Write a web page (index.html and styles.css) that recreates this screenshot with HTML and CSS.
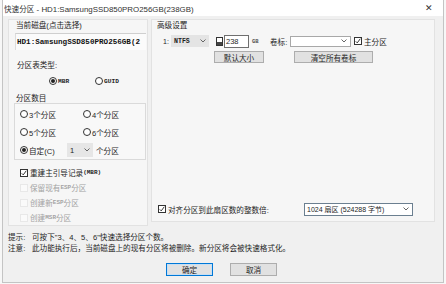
FILE: index.html
```html
<!DOCTYPE html>
<html lang="zh-CN">
<head>
<meta charset="utf-8">
<title>快速分区</title>
<link rel="stylesheet" href="styles.css">
</head>
<body>
<div class="window">
  <div class="titlebar">
    <span class="title"><span class="t-cn">快速分区</span> - HD1:SamsungSSD850PRO256GB(238GB)</span>
    <span class="close">✕</span>
  </div>
  <div class="main">
    <div class="panel left">
      <div class="lbl l-disk">当前磁盘(点击选择)</div>
      <div class="diskbox">HD1:SamsungSSD850PRO256GB(2</div>
      <div class="lbl l-type">分区表类型:</div>
      <div class="typerow">
        <span class="opt w46"><span class="radio on"></span><span class="mono">MBR</span></span>
        <span class="opt"><span class="radio"></span><span class="mono">GUID</span></span>
      </div>
      <div class="lbl l-count">分区数目</div>
      <div class="group">
        <div class="grow"><span class="opt w63"><span class="radio"></span>3个分区</span><span class="opt"><span class="radio"></span>4个分区</span></div>
        <div class="grow"><span class="opt w63"><span class="radio"></span>5个分区</span><span class="opt"><span class="radio"></span>6个分区</span></div>
        <div class="grow"><span class="opt w47"><span class="radio on"></span>自定(C)</span><span class="combo c-num"><span>1</span><svg class="chev" width="6" height="4" viewBox="0 0 6 4"><polyline points="0.5,0.5 3,3 5.5,0.5" fill="none" stroke="#666"/></svg></span><span class="after">个分区</span></div>
      </div>
      <div class="checks">
        <div class="chk"><span class="cb"><svg width="6" height="6" viewBox="0 0 8 8"><polyline points="1,4.5 3,6.5 7,1" fill="none" stroke="#222" stroke-width="1.2"/></svg></span>重建主引导记录<span class="mono sm">(MBR)</span></div>
        <div class="chk dis"><span class="cb"></span>保留现有<span class="mono sm">ESP</span>分区</div>
        <div class="chk dis"><span class="cb"></span>创建新<span class="mono sm">ESP</span>分区</div>
        <div class="chk dis"><span class="cb"></span>创建<span class="mono sm">MSR</span>分区</div>
      </div>
    </div>
    <div class="panel right">
      <div class="lbl l-adv">高级设置</div>
      <div class="row1">
        <span class="num">1:</span>
        <span class="combo c-fs"><span class="mono">NTFS</span><svg class="chev" width="6" height="4" viewBox="0 0 6 4"><polyline points="0.5,0.5 3,3 5.5,0.5" fill="none" stroke="#666"/></svg></span>
        <svg class="drive" width="7" height="9" viewBox="0 0 7 9"><rect x="0.5" y="0.5" width="6" height="8" fill="#fff" stroke="#333"/><rect x="1" y="5" width="5" height="3" fill="#444"/></svg>
        <span class="input i-size">238</span>
        <span class="unit mono">GB</span>
        <span class="vol">卷标:</span>
        <span class="input i-vol"><svg class="chev" width="6" height="4" viewBox="0 0 6 4"><polyline points="0.5,0.5 3,3 5.5,0.5" fill="none" stroke="#666"/></svg></span>
        <span class="cb dark"><svg width="6" height="6" viewBox="0 0 8 8"><polyline points="1,4.5 3,6.5 7,1" fill="none" stroke="#222" stroke-width="1.2"/></svg></span>
        <span class="primary">主分区</span>
      </div>
      <div class="row2">
        <span class="btn b-default">默认大小</span>
        <span class="btn b-clear">清空所有卷标</span>
      </div>
      <div class="spacer"></div>
      <div class="alignrow">
        <span class="cb dark"><svg width="6" height="6" viewBox="0 0 8 8"><polyline points="1,4.5 3,6.5 7,1" fill="none" stroke="#222" stroke-width="1.2"/></svg></span>
        <span class="align-txt">对齐分区到此扇区数的整数倍:</span>
        <span class="combo c-align"><span>1024 扇区 (524288 字节)</span><svg class="chev" width="6" height="4" viewBox="0 0 6 4"><polyline points="0.5,0.5 3,3 5.5,0.5" fill="none" stroke="#666"/></svg></span>
      </div>
    </div>
  </div>
  <div class="hints">
    <div class="hint"><span class="hl">提示:</span><span>可按下"3、4、5、6"快速选择分区个数。</span></div>
    <div class="hint"><span class="hl">注意:</span><span>此功能执行后，当前磁盘上的现有分区将被删除。新分区将会被快速格式化。</span></div>
  </div>
  <div class="buttons">
    <span class="btn b-ok">确定</span>
    <span class="btn b-cancel">取消</span>
  </div>
</div>
</body>
</html>
```

FILE: styles.css
```css
* { box-sizing: border-box; }
html, body { margin: 0; padding: 0; }
body {
  width: 446px;
  height: 284px;
  background: #f7f7f7;
  font-family: "Liberation Sans", "Noto Sans CJK SC", sans-serif;
  font-size: 7.6px;
  color: #1e1e1e;
  overflow: hidden;
}
.window {
  margin-left: 2px;
  width: 442px;
  height: 283px;
  background: #f0f0f0;
  border: 1px solid #c4c4c4;
  border-top: none;
}
.titlebar {
  height: 16px;
  background: #fff;
  display: flex;
  align-items: center;
  justify-content: space-between;
  padding: 0 0 0 1px;
}
.title { font-size: 7.9px; color: #333; white-space: nowrap; }
.t-cn { font-size: 7.6px; }
.close { font-size: 9px; color: #333; width: 22px; margin-right: 3px; text-align: center; }

.main { display: flex; align-items: flex-start; padding-top: 3px; }
.panel { background: #f6f6f6; border: 1px solid #e2e2e2; }
.left { margin-left: 5px; width: 140px; height: 207px; display: flex; flex-direction: column; }
.right { margin-left: 3px; width: 284px; height: 203px; display: flex; flex-direction: column; }

.lbl { line-height: 10px; height: 10px; white-space: nowrap; }
.l-disk { margin-top: 1px; padding-left: 7px; }
.diskbox {
  margin-top: 2px;
  margin-left: 6px;
  width: 131px;
  height: 17px;
  background: #fbfbfb;
  border-top: 1px solid #cfcfcf;
  border-left: 1px solid #dcdcdc;
  font-family: "Liberation Mono", monospace;
  font-weight: bold;
  font-size: 7.6px;
  line-height: 16px;
  padding-left: 1px;
  white-space: nowrap;
  overflow: hidden;
  color: #111;
}
.l-type { margin-top: 11px; padding-left: 8px; }
.typerow { margin-top: 5px; height: 10px; padding-left: 40px; display: flex; align-items: center; }
.l-count { margin-top: 8px; padding-left: 7px; height: 9px; line-height: 9px; }

.opt { display: inline-flex; align-items: center; white-space: nowrap; }
.w46 { width: 46px; }
.w63 { width: 63px; }
.w47 { width: 47px; }
.mono { font-family: "Liberation Mono", monospace; font-weight: bold; font-size: 6.2px; }
.mono.sm { font-size: 6px; }

.radio {
  width: 8px; height: 8px;
  border: 1px solid #333;
  border-radius: 50%;
  background: #fff;
  margin-right: 1px;
  display: inline-flex;
  align-items: center;
  justify-content: center;
  flex: none;
}
.radio.on::after {
  content: "";
  width: 4px; height: 4px;
  border-radius: 50%;
  background: #222;
}

.group {
  margin-left: 5px;
  width: 132px;
  height: 57px;
  border: 1px solid #dadada;
  background: #f8f8f8;
  padding: 1px 0 0 5px;
}
.grow { height: 18px; display: flex; align-items: center; }

.combo {
  display: inline-flex;
  align-items: center;
  justify-content: space-between;
  white-space: nowrap;
}
.c-num { width: 26px; height: 14px; background: #e6e6e6; padding: 0 3px 0 3px; font-size: 7.5px; }
.after { margin-left: 3px; }

.checks { margin-top: 5px; padding-left: 11px; }
.chk { height: 15px; display: flex; align-items: center; white-space: nowrap; }
.chk.dis { color: #a3a3a3; }
.cb {
  width: 8px; height: 8px;
  border: 1px solid #333;
  background: #fff;
  display: inline-flex;
  align-items: center;
  justify-content: center;
  margin-right: 2px;
  flex: none;
}
.chk.dis .cb { border-color: #e8e8e8; background: #fafafa; }

.l-adv { margin-top: 1px; padding-left: 5px; }
.row1 { margin-top: 3px; height: 14px; display: flex; align-items: center; white-space: nowrap; }
.num { padding-left: 11px; width: 19px; font-size: 7px; }
.c-fs { width: 38px; height: 12px; background: #e4e4e4; padding: 0 3px 0 3px; }
.c-fs .mono { font-size: 6.6px; }
.drive { margin-left: 7px; flex: none; }
.input { display: inline-flex; align-items: center; background: #fff; }
.i-size { margin-left: 1px; width: 25px; height: 13px; border: 1px solid #6f6f6f; padding-left: 1px; font-size: 7.5px; }
.unit { margin-left: 3px; width: 18px; font-size: 5.5px; color: #555; }
.vol { width: 20px; }
.i-vol { width: 61px; height: 11px; border: 1px solid #a8a8a8; justify-content: flex-end; padding-right: 3px; }
.row1 .cb { margin-left: 3px; }
.primary { margin-left: 0; }

.row2 { margin-top: 3px; height: 12px; display: flex; }
.btn {
  display: inline-flex;
  align-items: center;
  justify-content: center;
  background: #e1e1e1;
  border: 1px solid #adadad;
  white-space: nowrap;
}
.b-default { margin-left: 62px; width: 50px; height: 12px; }
.b-clear { margin-left: 30px; width: 79px; height: 12px; }

.spacer { flex: 1; }
.alignrow { margin-bottom: 5px; height: 14px; display: flex; align-items: center; padding-left: 6px; white-space: nowrap; }
.align-txt { width: 136px; }
.c-align {
  width: 109px; height: 13px;
  background: #fff;
  border: 1px solid #6b7f90;
  padding: 0 3px 0 2px;
  font-size: 7px;
}

.hints { margin-top: 6px; padding-left: 5px; }
.hint { height: 11px; line-height: 11px; display: flex; white-space: nowrap; }
.hl { width: 24px; }

.buttons { margin-top: 9px; padding-left: 163px; display: flex; gap: 17px; }
.b-ok, .b-cancel { width: 47px; height: 13px; }
.b-ok { border-color: #0078d7; box-shadow: inset 0 0 0 1px #c8dff3; }
```
